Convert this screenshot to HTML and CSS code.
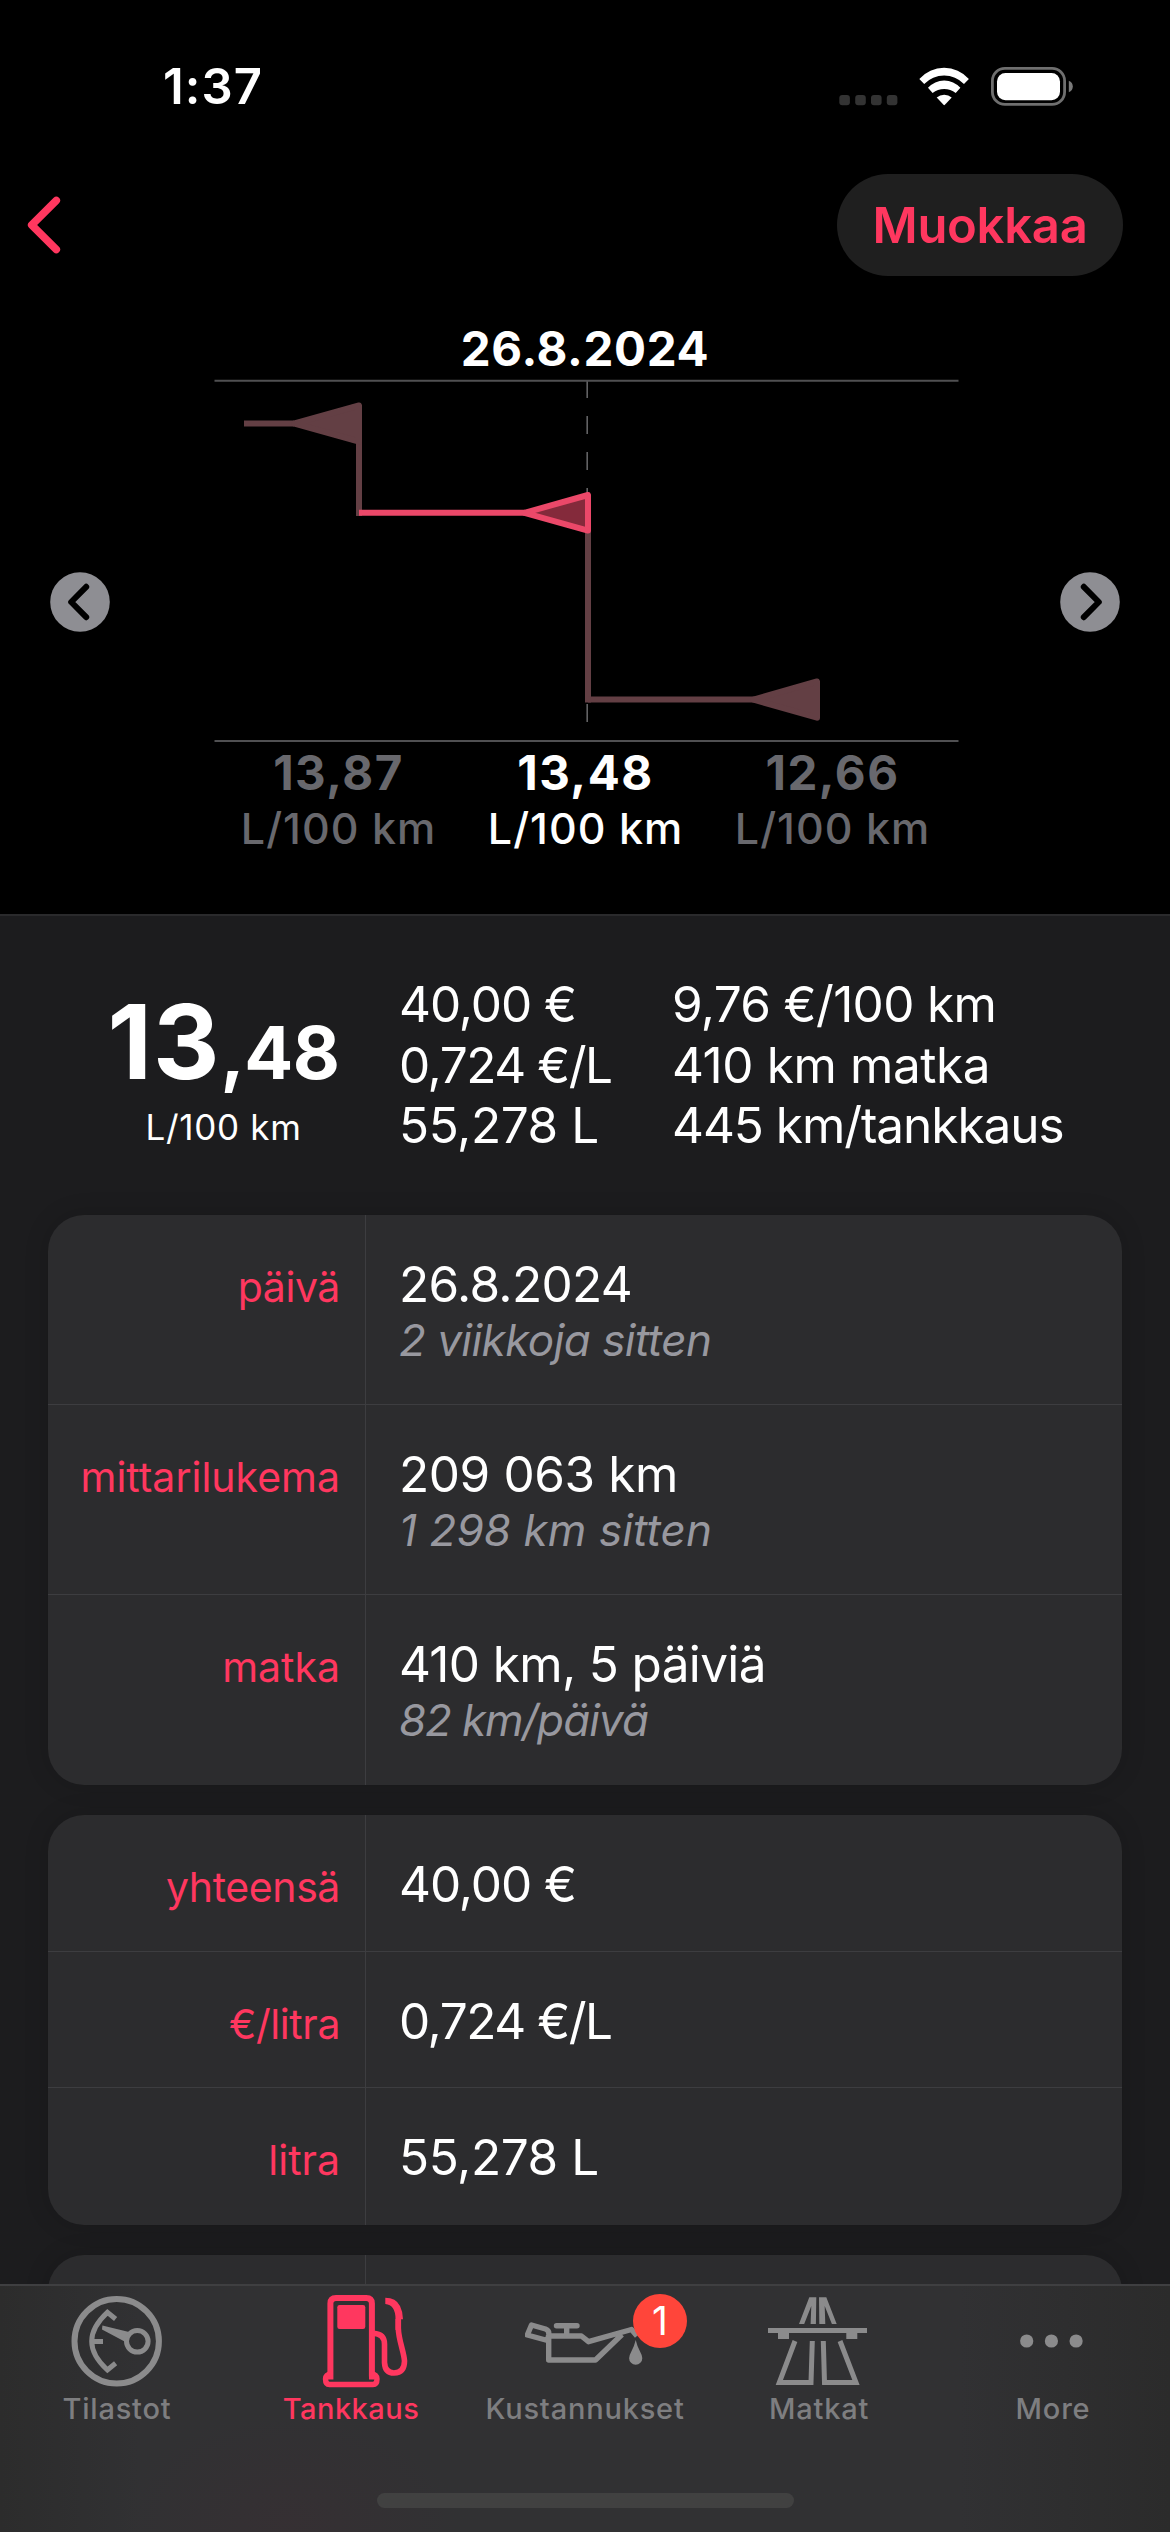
FILE: index.html
```html
<!DOCTYPE html>
<html lang="fi">
<head>
<meta charset="utf-8">
<title>Tankkaus</title>
<link rel="stylesheet" href="styles.css">
</head>
<body>
<div class="screen">
  <div class="status-bar">
    <span class="time">1:37</span>
    <svg class="status-icons" viewBox="0 0 260 80" width="260" height="80">
      <g fill="#333">
        <rect x="19.3" y="45" width="10.6" height="10.2" rx="3"/>
        <rect x="35.2" y="45" width="10.6" height="10.2" rx="3"/>
        <rect x="51" y="45" width="10.6" height="10.2" rx="3"/>
        <rect x="66.8" y="45" width="10.6" height="10.2" rx="3"/>
      </g>
      <g fill="#fff">
        <path d="M99.3 29A33.2 33.2 0 0 1 148.9 29L144 34A27.8 27.8 0 0 0 104.2 34Z"/>
        <path d="M108 37.8A21.8 21.8 0 0 1 140.4 37.8L135.7 42.9A19 19 0 0 0 112.6 42.9Z"/>
        <path d="M116.7 47.6A11 11 0 0 1 131.7 47.6L124.9 54.8Q124.2 55.5 123.5 54.8Z"/>
        <rect x="177" y="23" width="63" height="27.2" rx="8.5"/>
      </g>
      <rect x="172.4" y="18.4" width="72.2" height="36" rx="12.5" fill="none" stroke="#6f6f6f" stroke-width="2.8"/>
      <path d="M248.8 30.7Q252.8 32.5 252.8 36.5T248.8 42.3Z" fill="#7a7a7a"/>
    </svg>
  </div>

  <div class="nav-bar">
    <svg class="back" viewBox="0 0 40 64" width="40" height="64"><path d="M32.3 7.5L7.7 32L32.3 56.5"/></svg>
    <span class="edit-button">Muokkaa</span>
  </div>

  <div class="hero">
    <svg class="arrow" viewBox="0 0 60 60" width="60" height="60"><circle cx="30" cy="30" r="29.8"/><path d="M36.2 14.8L21.2 30L36.2 45.2"/></svg>
    <div class="hero-main">
      <div class="hero-date">26.8.2024</div>
      <svg class="chart" viewBox="213 380 744 362" width="744" height="362">
        <path d="M587.2 380V742" fill="none" stroke="#626264" stroke-width="1.6" stroke-dasharray="18 18"/>
        <path d="M214.5 380.7H958.5M214.5 741H958.5" fill="none" stroke="#505052" stroke-width="2"/>
        <g class="faded">
          <path d="M244 423.5H294M359 423.5V516M588 513V702.5" />
          <path d="M588 699.6H756"/>
          <path class="solid" d="M294.5 423.5L359 405.5V441.5Z"/>
          <path class="solid" d="M753.5 699.6L817 681.5V717.7Z"/>
        </g>
        <g class="current">
          <path d="M359 512.8H525"/>
          <path class="solid" d="M524.5 512.8L588 495V530.6Z"/>
        </g>
      </svg>
      <div class="readings">
        <div class="reading"><b>13,87</b><span>L/100 km</span></div>
        <div class="reading active"><b>13,48</b><span>L/100 km</span></div>
        <div class="reading"><b>12,66</b><span>L/100 km</span></div>
      </div>
    </div>
    <svg class="arrow" viewBox="0 0 60 60" width="60" height="60"><circle cx="30" cy="30" r="29.8"/><path d="M23.8 14.8L38.8 30L23.8 45.2"/></svg>
  </div>

  <div class="details">
    <div class="summary">
      <div class="economy">
        <div class="economy-value"><span class="whole">13</span><span class="fraction">,48</span></div>
        <div class="economy-unit">L/100 km</div>
      </div>
      <div class="facts">
        <div class="tight-l">40,00 €</div>
        <div class="tight-xl">0,724 €/L</div>
        <div class="tight-s">55,278 L</div>
      </div>
      <div class="facts wide">
        <div class="tight-m">9,76 €/100 km</div>
        <div class="tight-s">410 km matka</div>
        <div class="tight-l">445 km/tankkaus</div>
      </div>
    </div>

    <div class="card tall">
      <div class="row"><div class="label snug">päivä</div><div class="value"><div class="tight-m">26.8.2024</div><em>2 viikkoja sitten</em></div></div>
      <div class="row"><div class="label">mittarilukema</div><div class="value"><div class="tight-s">209 063 km</div><em class="plain">1 298 km sitten</em></div></div>
      <div class="row"><div class="label">matka</div><div class="value"><div class="tight-m">410 km, 5 päiviä</div><em class="tight-l">82 km/päivä</em></div></div>
    </div>
    <div class="card short">
      <div class="row"><div class="label snug">yhteensä</div><div class="value"><div class="tight-l">40,00 €</div></div></div>
      <div class="row"><div class="label snug">€/litra</div><div class="value"><div class="tight-xl">0,724 €/L</div></div></div>
      <div class="row"><div class="label">litra</div><div class="value"><div class="tight-s">55,278 L</div></div></div>
    </div>
    <div class="card short">
      <div class="row"><div class="label"></div><div class="value"></div></div>
    </div>
  </div>

  <div class="tab-bar">
    <div class="tabs">
      <div class="tab">
        <svg viewBox="0 0 120 96" width="120" height="96">
          <g fill="none" stroke="currentColor">
            <circle cx="59.7" cy="49.2" r="42.2" stroke-width="6"/>
            <path d="M58.6 27L50.4 20.4Q34.7 35 34.7 49.3T50.4 78L58.6 71.3M34.7 49.6H46" stroke-width="5"/>
            <circle cx="80.3" cy="49.3" r="10.8" stroke-width="5"/>
          </g>
          <path d="M45.4 33.6L73 40.2L67.6 49.4L45 37.4Z" fill="currentColor"/>
        </svg>
        <span>Tilastot</span>
      </div>
      <div class="tab selected">
        <svg viewBox="0 0 120 96" width="120" height="96">
          <g fill="none" stroke="currentColor" stroke-width="6">
            <path d="M42.4 84.5H39.4V11.5Q39.4 6 45 6H75.3Q80.9 6 80.9 11.5V84.5H78"/>
            <path d="M41 81.5Q34.5 82.5 34.5 87Q34.5 92.5 38.5 92.5H82Q86 92.5 86 87Q86 82.5 79.5 81.5" stroke-width="5.4"/>
            <path d="M82.5 41.3Q93.5 42 93.5 52V70.5Q94 81 103 81Q113.5 80.5 113.5 69C113 60 107.5 48 107.3 36V27" stroke-width="5.6"/>
          </g>
          <rect x="46.3" y="13" width="28" height="24" rx="2.3" fill="currentColor"/>
          <path d="M94.3 5.8Q105 5.8 109 14Q112 20 112 27.3H110V38H104.5V27Q104.5 13 94.3 12Z" fill="currentColor"/>
        </svg>
        <span>Tankkaus</span>
      </div>
      <div class="tab">
        <svg viewBox="0 0 120 96" width="120" height="96">
          <g fill="none" stroke="currentColor" stroke-width="5.4" stroke-linejoin="round">
            <path d="M6.5 33L20.5 37Q24.5 38.5 23.7 43L22.5 48.5L2.3 43Z"/>
            <path d="M23.7 44H56.4L63.5 49.7L106.5 37.5L112 44M23.7 44V68H70.5L97 42.5"/>
            <path d="M31.5 33.7H52M41.7 34V43" stroke-linecap="round"/>
          </g>
          <path d="M110.7 48Q112 54 115.5 60.5Q117.3 63.5 117.3 66.2A6.6 6.6 0 0 1 104.1 66.2Q104.1 63.5 105.9 60.5Q109.4 54 110.7 48Z" fill="currentColor"/>
        </svg>
        <i class="badge">1</i>
        <span>Kustannukset</span>
      </div>
      <div class="tab">
        <svg viewBox="0 0 120 96" width="120" height="96">
          <path d="M50.3 5.3L40 32H45.2L52.3 14L51.6 32H56.9L57.3 5.3ZM60 5.3H67.3L77.7 32H72.9L65.7 14L66.3 32H60.3ZM9 36H108V41H98.3V47H87.3V41H30V47H19V41H9Z" fill="currentColor"/>
          <path d="M36 49L20.3 90.5H52L53.3 49M64.3 49L65.5 90.5H97L81 49" fill="none" stroke="currentColor" stroke-width="5"/>
        </svg>
        <span>Matkat</span>
      </div>
      <div class="tab">
        <svg viewBox="0 0 120 96" width="120" height="96"><g fill="currentColor"><circle cx="33.7" cy="49" r="6.6"/><circle cx="58.4" cy="49" r="6.6"/><circle cx="83.1" cy="49" r="6.6"/></g></svg>
        <span>More</span>
      </div>
    </div>
    <div class="home-indicator"></div>
  </div>
</div>
</body>
</html>
```
FILE: styles.css
```css
* { box-sizing: border-box; }

body {
  margin: 0;
  background: #000;
  color: #fff;
  font-family: Inter, "Liberation Sans", sans-serif;
}

svg { display: block; flex: none; }

.screen {
  width: 1170px;
  height: 2532px;
  overflow: hidden;
  display: flex;
  flex-direction: column;
}

/* status bar */
.status-bar {
  flex: none;
  height: 174px;
  padding: 50px 90px 0 163px;
  display: flex;
  justify-content: space-between;
}
.time {
  font-size: 49px;
  font-weight: 600;
  line-height: 74px;
  letter-spacing: 1.1px;
}

/* navigation bar */
.nav-bar {
  flex: none;
  height: 144px;
  padding: 0 47px 42px 24px;
  display: flex;
  justify-content: space-between;
  align-items: center;
}
.back path {
  fill: none;
  stroke: #ff375f;
  stroke-width: 7.6;
  stroke-linecap: round;
  stroke-linejoin: round;
}
.edit-button {
  width: 286px;
  height: 102px;
  border-radius: 51px;
  background: #1f1f1f;
  color: #ff375f;
  font-size: 49px;
  font-weight: 560;
  line-height: 103px;
  letter-spacing: -0.3px;
  text-align: center;
}

/* chart */
.hero {
  flex: none;
  height: 568px;
  padding: 0 50px;
  display: flex;
  justify-content: space-between;
  align-items: center;
}
.arrow circle { fill: #8e8e93; }
.arrow path {
  fill: none;
  stroke: #000;
  stroke-width: 6;
  stroke-linecap: round;
  stroke-linejoin: round;
}
.hero-main {
  width: 744px;
  height: 568px;
}
.hero-date {
  font-size: 47.5px;
  font-weight: 750;
  line-height: 62px;
  letter-spacing: 0.6px;
  text-align: center;
}
.chart { overflow: visible; }
.faded path, .current path { fill: none; stroke-width: 6; stroke-linejoin: round; }
.faded path { stroke: #633f44; }
.faded .solid { fill: #633f44; }
.current path { stroke: #eb4869; }
.current .solid { fill: #842a3b; }

.readings {
  display: grid;
  grid-template-columns: repeat(3, 247px);
  justify-content: center;
  padding: 3px 0 0 1px;
  text-align: center;
}
.reading {
  display: flex;
  flex-direction: column;
  color: #68686d;
}
.reading.active { color: #fff; }
.reading b { font-size: 47.5px; font-weight: 750; line-height: 56px; letter-spacing: 1.5px; }
.reading span { font-size: 43px; font-weight: 500; line-height: 55px; letter-spacing: 1px; }

/* details */
.details {
  flex: none;
  height: 1370px;
  margin-top: 28px;
  border-top: 2px solid #2a2a2c;
  background: #1c1c1e;
  padding: 0 48px;
  display: flex;
  flex-direction: column;
  gap: 30px;
  overflow: hidden;
}
.summary {
  flex: none;
  height: 269px;
  padding: 58px 0 0 56px;
  display: flex;
}
.economy { width: 239px; text-align: center; }
.economy-value {
  height: 132px;
  line-height: 135px;
  font-weight: 720;
  white-space: nowrap;
}
.whole { font-size: 103px; letter-spacing: 1px; }
.fraction { font-size: 72.5px; letter-spacing: -0.5px; }
.economy-unit { font-size: 35px; line-height: 42px; letter-spacing: 0.7px; }
.facts {
  width: 273px;
  padding-left: 56px;
  font-size: 49.5px;
  line-height: 60.5px;
  white-space: nowrap;
}
.facts.wide { width: auto; }

.tight-s { letter-spacing: -0.4px; }
.tight-m { letter-spacing: -0.65px; }
.tight-l { letter-spacing: -1.05px; }
.tight-xl { letter-spacing: -1.45px; }

.card {
  flex: none;
  display: flex;
  flex-direction: column;
  border-radius: 36px;
  background: #2c2c2e;
  box-shadow: 0 0 24px rgba(0, 0, 0, 0.16);
}
.row { display: flex; }
.tall .row { height: 190px; }
.short .row { height: 136.67px; }
.row:not(:last-child) { border-bottom: 1px solid #3d3d40; }
.label {
  width: 318px;
  padding: 44px 25px 0 0;
  border-right: 1px solid #3d3d40;
  color: #ff375f;
  font-size: 41px;
  line-height: 57px;
  text-align: right;
}
.label.snug { letter-spacing: -0.4px; }
.value {
  padding: 41px 0 0 33px;
  font-size: 49.5px;
  line-height: 57px;
}
.value em {
  display: block;
  color: #98989f;
  font-size: 44px;
  line-height: 55px;
  letter-spacing: -0.54px;
}
.value em.plain { letter-spacing: 0.1px; }
.value em.tight-l { letter-spacing: -1.15px; }

/* tab bar */
.tab-bar {
  flex: none;
  height: 248px;
  border-top: 2px solid #3f3f41;
  background:
    radial-gradient(ellipse 170px 110px at 290px 235px, rgba(90, 35, 50, 0.1), transparent),
    linear-gradient(to right, #2c2c2c, #313133 140px, #313133 960px, #2b2b2b);
  display: flex;
  flex-direction: column;
  align-items: center;
}
.tabs {
  display: grid;
  grid-template-columns: repeat(5, 234px);
  height: 207px;
  padding-top: 6px;
}
.tab {
  position: relative;
  display: flex;
  flex-direction: column;
  align-items: center;
  color: #8b8b8c;
}
.tab span {
  color: #7e7e80;
  font-size: 29px;
  font-weight: 500;
  line-height: 41px;
  letter-spacing: 0.8px;
}
.tab.selected, .tab.selected span { color: #ff375f; }
.tab.selected span { letter-spacing: 0.5px; }
.badge {
  position: absolute;
  left: 165px;
  top: 2px;
  width: 54px;
  height: 54px;
  border-radius: 50%;
  background: #ff453a;
  color: #fff;
  font-style: normal;
  font-size: 39px;
  line-height: 53px;
  text-align: center;
}
.home-indicator {
  width: 417px;
  height: 15px;
  border-radius: 8px;
  background: #414141;
}
```
